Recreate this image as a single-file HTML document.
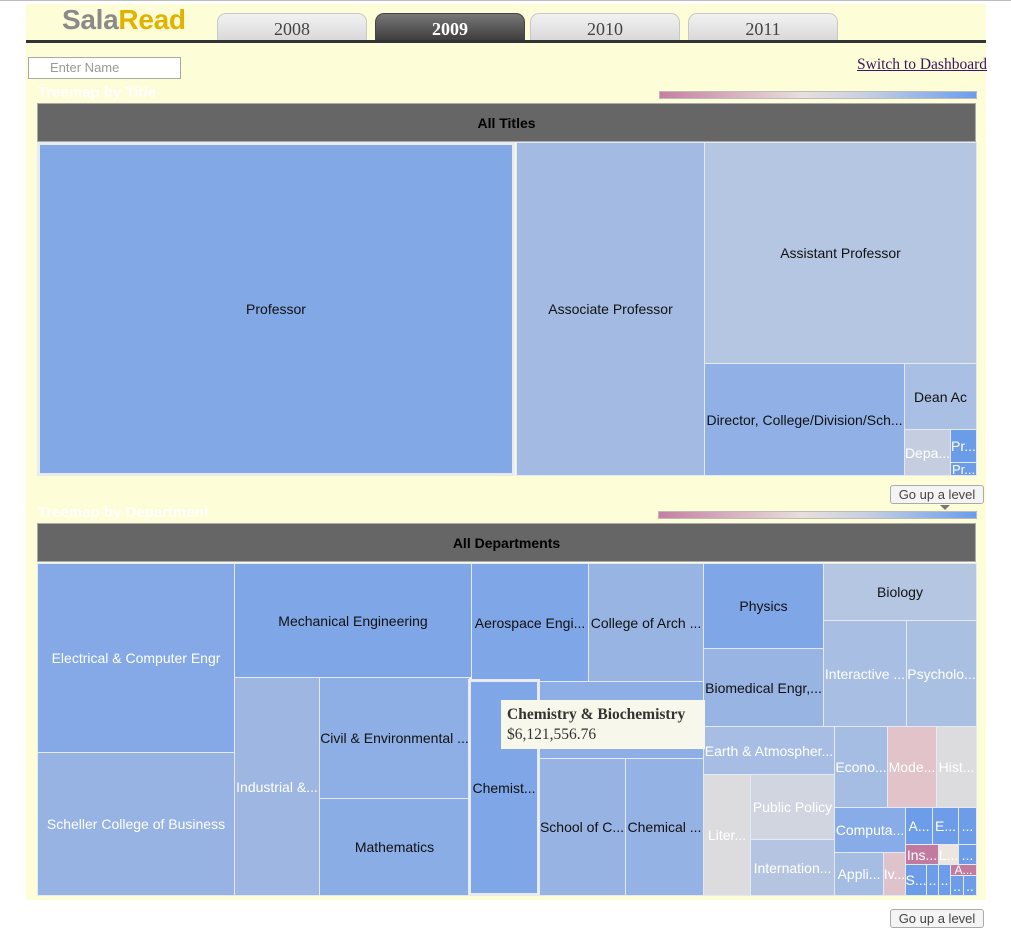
<!DOCTYPE html>
<html><head><meta charset="utf-8"><style>
body{margin:0;width:1011px;height:948px;background:#fff;position:relative;overflow:hidden;font-family:"Liberation Sans",sans-serif}
.a{position:absolute}
.c{position:absolute;box-sizing:border-box;border:1px solid #e4eaf5;display:flex;align-items:center;justify-content:center;font-size:14px;color:#111;white-space:nowrap;overflow:hidden}
.w{color:#fff}
.tab{position:absolute;top:13px;height:28px;width:150px;box-sizing:border-box;border:1px solid #c8c8c8;border-bottom:none;border-radius:9px 9px 0 0;background:linear-gradient(#f2f2f2,#d8d8d8);font-family:"Liberation Serif",serif;font-size:18px;color:#444;text-align:center;line-height:30px}
.hdr{position:absolute;left:37px;width:939px;height:39px;background:#666;border:1px solid #aaa;box-sizing:border-box;font-weight:bold;font-size:14px;text-align:center;line-height:38px;color:#000}
.grad{position:absolute;height:8px;background:linear-gradient(90deg,#c57fa2,#e8dfdb 45%,#c7d0e2 65%,#6b9ded);border:1px solid #bbb;box-sizing:border-box}
.btn{position:absolute;left:890px;width:94px;height:19px;box-sizing:border-box;border:1px solid #aaa;border-radius:3px;background:#f4f4f4;font-size:13px;color:#444;text-align:center;line-height:17px}
.ttl{position:absolute;left:38px;color:#fff;font-weight:bold;font-size:15px}
</style></head><body>
<div class="a" style="left:0;top:0;width:1011px;height:1px;background:#bbb"></div>
<div class="a" style="left:26px;top:4px;width:960px;height:896px;background:#fdfdd8"></div>
<div class="a" style="left:62px;top:4px;font-size:28px;font-weight:bold;letter-spacing:-0.3px"><span style="color:#8a8a8a">Sala</span><span style="color:#e2b200">Read</span></div>
<div class="tab" style="left:217px">2008</div>
<div class="tab" style="left:375px;background:linear-gradient(#777,#3c3c3c);color:#fff;border-color:#444;font-weight:bold">2009</div>
<div class="tab" style="left:530px">2010</div>
<div class="tab" style="left:688px">2011</div>
<div class="a" style="left:26px;top:40px;width:960px;height:3px;background:#333"></div>
<div class="a" style="left:28px;top:57px;width:153px;height:22px;box-sizing:border-box;border:1px solid #aaa;background:#fff;font-size:13px;color:#999;padding-left:21px;line-height:20px">Enter Name</div>
<div class="a" style="left:857px;top:56px;font-family:'Liberation Serif',serif;font-size:15.5px;color:#3a1466;text-decoration:underline">Switch to Dashboard</div>
<div class="ttl" style="top:84px">Treemap by Title</div>
<div class="grad" style="left:659px;top:91px;width:318px"></div>
<div class="hdr" style="top:103px">All Titles</div>

<div class="c" style="left:37px;top:142px;width:478px;height:334px;background:#82a9e5;border:3px solid #e8ecf2">Professor</div>
<div class="c" style="left:516px;top:142px;width:189px;height:334px;background:#a3bbe3">Associate Professor</div>
<div class="c" style="left:704px;top:142px;width:273px;height:222px;background:#b5c6e2">Assistant Professor</div>
<div class="c" style="left:704px;top:363px;width:201px;height:113px;background:#91b1e6">Director, College/Division/Sch...</div>
<div class="c" style="left:904px;top:363px;width:73px;height:67px;background:#a9bfe3">Dean Ac</div>
<div class="c w" style="left:904px;top:429px;width:47px;height:47px;background:#c4cee0">Depa...</div>
<div class="c w" style="left:950px;top:429px;width:27px;height:34px;background:#6a9ce8">Pr...</div>
<div class="c w" style="left:950px;top:462px;width:27px;height:14px;background:#6a9ce8;font-size:13px">Pr...</div>

<div class="btn" style="top:485px">Go up a level</div>
<div class="ttl" style="top:504px">Treemap by Department</div>
<div class="a" style="left:940px;top:505px;width:0;height:0;border-left:5px solid transparent;border-right:5px solid transparent;border-top:5px solid #777"></div>
<div class="grad" style="left:658px;top:511px;width:319px"></div>
<div class="hdr" style="top:523px">All Departments</div>

<div class="c w" style="left:37px;top:563px;width:198px;height:190px;background:#84a9e6">Electrical &amp; Computer Engr</div>
<div class="c w" style="left:37px;top:752px;width:198px;height:144px;background:#97b3e4">Scheller College of Business</div>
<div class="c" style="left:234px;top:563px;width:238px;height:115px;background:#7fa6e6">Mechanical Engineering</div>
<div class="c w" style="left:234px;top:677px;width:86px;height:219px;background:#9db6e2">Industrial &amp;...</div>
<div class="c" style="left:319px;top:677px;width:151px;height:122px;background:#8eafe5">Civil &amp; Environmental ...</div>
<div class="c" style="left:319px;top:798px;width:151px;height:98px;background:#8aade6">Mathematics</div>
<div class="c" style="left:471px;top:563px;width:118px;height:119px;background:#7fa6e6">Aerospace Engi...</div>
<div class="c" style="left:588px;top:563px;width:116px;height:119px;background:#98b4e3">College of Arch ...</div>
<div class="c" style="left:538px;top:681px;width:166px;height:78px;background:#8eafe5"></div>
<div class="c" style="left:538px;top:758px;width:88px;height:138px;background:#97b3e4">School of C...</div>
<div class="c" style="left:625px;top:758px;width:79px;height:138px;background:#94b2e4">Chemical ...</div>
<div class="c" style="left:468px;top:679px;width:72px;height:217px;background:#7fa6e6;border:3px solid #e8ecf2">Chemist...</div>
<div class="c" style="left:703px;top:563px;width:121px;height:86px;background:#7fa6e6">Physics</div>
<div class="c" style="left:823px;top:563px;width:154px;height:58px;background:#b5c6e2">Biology</div>
<div class="c" style="left:703px;top:648px;width:121px;height:79px;background:#98b4e3">Biomedical Engr,...</div>
<div class="c w" style="left:823px;top:620px;width:84px;height:107px;background:#a8bee3">Interactive ...</div>
<div class="c w" style="left:906px;top:620px;width:71px;height:107px;background:#aac0e3">Psycholo...</div>
<div class="c w" style="left:703px;top:726px;width:132px;height:49px;background:#a7bde4">Earth &amp; Atmospher...</div>
<div class="c w" style="left:703px;top:774px;width:48px;height:122px;background:#dcdcdf">Liter...</div>
<div class="c w" style="left:750px;top:774px;width:85px;height:66px;background:#d0d5e0">Public Policy</div>
<div class="c w" style="left:750px;top:839px;width:85px;height:57px;background:#b4c4e1">Internation...</div>
<div class="c w" style="left:834px;top:726px;width:54px;height:82px;background:#a5bde3">Econo...</div>
<div class="c w" style="left:887px;top:726px;width:50px;height:82px;background:#e1c3c9">Mode...</div>
<div class="c w" style="left:936px;top:726px;width:41px;height:82px;background:#dcdcde">Hist...</div>
<div class="c w" style="left:834px;top:807px;width:72px;height:46px;background:#88ace7">Computa...</div>
<div class="c w" style="left:905px;top:807px;width:28px;height:38px;background:#6d9de8">A...</div>
<div class="c w" style="left:932px;top:807px;width:27px;height:38px;background:#6d9de8">E...</div>
<div class="c w" style="left:958px;top:807px;width:19px;height:38px;background:#6d9de8">...</div>
<div class="c w" style="left:905px;top:844px;width:34px;height:21px;background:#c27b9e">Ins...</div>
<div class="c w" style="left:938px;top:844px;width:21px;height:21px;background:#ece6df">L...</div>
<div class="c w" style="left:958px;top:844px;width:19px;height:21px;background:#6d9de8">...</div>
<div class="c w" style="left:834px;top:852px;width:50px;height:44px;background:#a5bde3">Appli...</div>
<div class="c w" style="left:883px;top:852px;width:23px;height:44px;background:#dfc3cb">Iv...</div>
<div class="c w" style="left:905px;top:864px;width:22px;height:32px;background:#6d9de8">S...</div>
<div class="c w" style="left:926px;top:864px;width:13px;height:32px;background:#6d9de8">..</div>
<div class="c w" style="left:938px;top:864px;width:13px;height:32px;background:#6d9de8">..</div>
<div class="c w" style="left:950px;top:864px;width:27px;height:12px;background:#c27b9e;font-size:12px">A...</div>
<div class="c w" style="left:950px;top:875px;width:14px;height:21px;background:#6d9de8">..</div>
<div class="c w" style="left:963px;top:875px;width:14px;height:21px;background:#6d9de8">..</div>

<div class="a" style="left:501px;top:700px;width:204px;height:49px;background:#f7f7ec;font-family:'Liberation Serif',serif;color:#333;padding:5px 0 0 6px;box-sizing:border-box">
<div style="font-weight:bold;font-size:15.5px;line-height:19px;white-space:nowrap">Chemistry &amp; Biochemistry</div>
<div style="font-size:15.5px;line-height:21px">$6,121,556.76</div></div>

<div class="btn" style="top:909px">Go up a level</div>
</body></html>
